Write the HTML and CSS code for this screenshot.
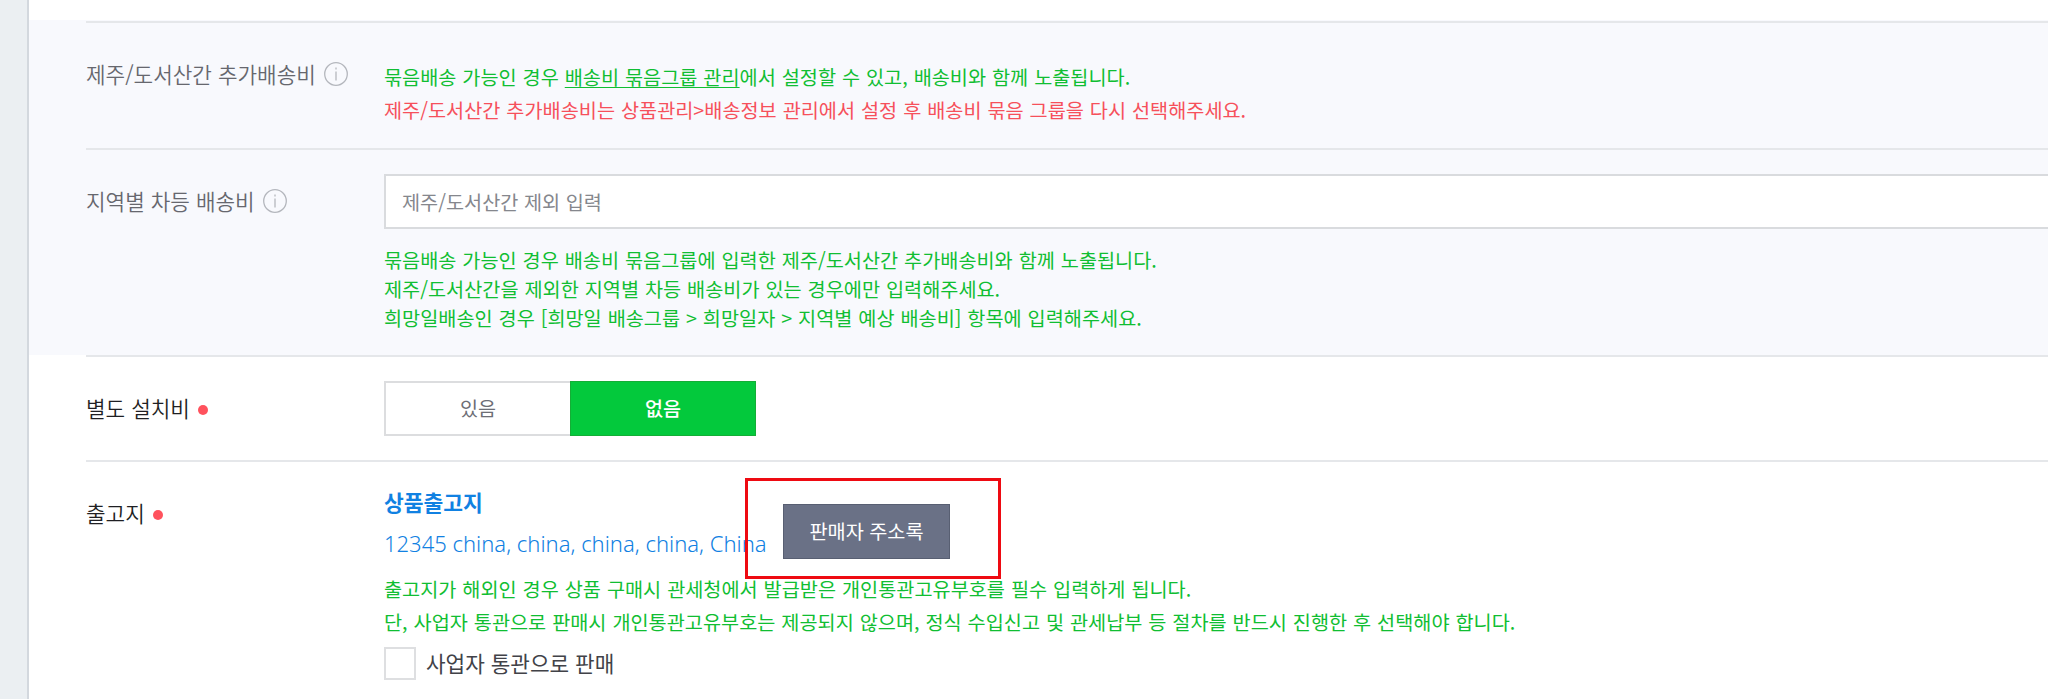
FILE: index.html
```
<!DOCTYPE html>
<html lang="ko">
<head>
    <meta charset="UTF-8">
    <meta name="viewport" content="width=device-width, initial-scale=1.0">
    <title>배송 정보</title>
    <link rel="stylesheet" href="styles.css">
</head>
<body>
    <div class="sidebar"></div>
    <main class="content">
        <div class="section section-sub">
            <div class="row row-extra">
                <div class="label">
                    <span>제주/도서산간 추가배송비</span>
                    <svg class="info" viewBox="0 0 24 24"><circle cx="12" cy="12" r="11.3"/><path d="M12 9.5v9M12 5.5v2"/></svg>
                </div>
                <div class="value">
                    <p class="help">묶음배송 가능인 경우 <a href="#">배송비 묶음그룹 관리</a>에서 설정할 수 있고, 배송비와 함께 노출됩니다.</p>
                    <p class="help warn">제주/도서산간 추가배송비는 상품관리&gt;배송정보 관리에서 설정 후 배송비 묶음 그룹을 다시 선택해주세요.</p>
                </div>
            </div>
            <div class="row row-region">
                <div class="label">
                    <span>지역별 차등 배송비</span>
                    <svg class="info" viewBox="0 0 24 24"><circle cx="12" cy="12" r="11.3"/><path d="M12 9.5v9M12 5.5v2"/></svg>
                </div>
                <div class="value">
                    <input class="input" type="text" placeholder="제주/도서산간 제외 입력">
                    <div class="help-tight">
                        <p class="help">묶음배송 가능인 경우 배송비 묶음그룹에 입력한 제주/도서산간 추가배송비와 함께 노출됩니다.</p>
                        <p class="help">제주/도서산간을 제외한 지역별 차등 배송비가 있는 경우에만 입력해주세요.</p>
                        <p class="help">희망일배송인 경우 [희망일 배송그룹 &gt; 희망일자 &gt; 지역별 예상 배송비] 항목에 입력해주세요.</p>
                    </div>
                </div>
            </div>
        </div>
        <div class="section">
            <div class="row row-install">
                <div class="label dark"><span>별도 설치비</span><i class="dot"></i></div>
                <div class="value toggle">
                    <button class="toggle-btn">있음</button>
                    <button class="toggle-btn active">없음</button>
                </div>
            </div>
            <div class="row row-origin">
                <div class="label dark"><span>출고지</span><i class="dot"></i></div>
                <div class="value">
                    <div class="address">
                        <div>
                            <strong class="address-name">상품출고지</strong>
                            <p class="address-text">12345 china, china, china, china, China</p>
                        </div>
                        <div class="book">
                            <button class="book-btn">판매자 주소록</button>
                            <div class="highlight"></div>
                        </div>
                    </div>
                    <p class="help">출고지가 해외인 경우 상품 구매시 관세청에서 발급받은 개인통관고유부호를 필수 입력하게 됩니다.</p>
                    <p class="help">단, 사업자 통관으로 판매시 개인통관고유부호는 제공되지 않으며, 정식 수입신고 및 관세납부 등 절차를 반드시 진행한 후 선택해야 합니다.</p>
                    <label class="check"><span class="box"></span><span>사업자 통관으로 판매</span></label>
                </div>
            </div>
        </div>
    </main>
</body>
</html>
```
FILE: styles.css
```
* {
    box-sizing: border-box;
}

body {
    margin: 0;
    height: 699px;
    display: flex;
    overflow: hidden;
    background: #fff;
    font-family: "Noto Sans CJK KR", sans-serif;
    color: #303038;
}

p {
    margin: 0;
}

button, input {
    font: inherit;
    border-radius: 0;
}

.sidebar {
    width: 29px;
    flex: none;
    background: #ebeff2;
    border-right: 2px solid #d3d8de;
}

.content {
    flex: 1;
    min-width: 0;
    padding-top: 20px;
}

.section {
    padding-left: 57px;
}

.section-sub {
    background: #f8f9fd;
    padding-top: 1px;
}

.row {
    display: flex;
    border-top: 2px solid #e5e7ea;
}

.row-extra {
    height: 127px;
    padding-top: 38px;
}

.row-region {
    height: 207px;
    padding-top: 24px;
}

.row-install {
    height: 105px;
    padding-top: 24px;
}

.row-origin {
    padding-top: 21px;
}

.label {
    width: 298px;
    flex: none;
    display: flex;
    align-items: center;
    height: 28px;
    font-size: 21.3px;
    font-weight: 350;
    line-height: 28px;
    color: #66676e;
    white-space: nowrap;
}

.row-extra .label {
    margin-top: -1px;
}

.row-region .label,
.row-install .label {
    margin-top: 13px;
}

.row-origin .label {
    margin-top: 16px;
}

.label.dark {
    color: #1f1f23;
}

.value {
    flex: 1;
    min-width: 0;
}

.info {
    width: 24px;
    height: 24px;
    margin-left: 8px;
    fill: none;
    stroke: #b4b7bd;
    stroke-width: 1.3;
}

.dot {
    width: 10px;
    height: 10px;
    margin: 3px 0 0 8px;
    border-radius: 50%;
    background: #ff525d;
}

.help {
    font-size: 19.7px;
    line-height: 32.5px;
    word-spacing: 0.4px;
    color: #10be32;
    white-space: nowrap;
}

.help a {
    color: inherit;
    text-underline-offset: 2px;
}

.help.warn {
    color: #f6505b;
}

.input {
    display: block;
    width: 1700px;
    height: 55px;
    padding: 0 16px;
    border: 2px solid #d9dbde;
    background: #fff;
    font-size: 19.7px;
}

.input::placeholder {
    color: #85878d;
}

.help-tight {
    padding-top: 16px;
}

.help-tight .help {
    line-height: 29px;
}

.toggle {
    display: flex;
}

.toggle-btn {
    width: 186px;
    height: 55px;
    padding-bottom: 3px;
    border: 2px solid #dcdddf;
    border-right: 0;
    background: #fff;
    font-size: 19.6px;
    color: #6d6e75;
}

.toggle-btn.active {
    border: 1px solid #14ae36;
    background: #03c93c;
    font-weight: 500;
    color: #fff;
}

.address {
    display: flex;
    height: 90px;
    color: #1181e2;
}

.address-name {
    display: block;
    font-size: 21.5px;
    line-height: 38px;
}

.address-text {
    width: 399px;
    padding-top: 1px;
    font-family: "Noto Sans", sans-serif;
    font-size: 22px;
    font-weight: 350;
    line-height: 42px;
    white-space: nowrap;
}

.book {
    position: relative;
    height: 55px;
    margin-top: 21px;
}

.book-btn {
    display: block;
    width: 167px;
    height: 55px;
    padding-bottom: 3px;
    border: 1px solid #585f72;
    background: #6a7186;
    font-size: 19.7px;
    color: #fff;
}

/* red frame around the address book button */
.highlight {
    position: absolute;
    left: -38px;
    top: -26px;
    width: 256px;
    height: 101px;
    border: 3px solid #ee0a12;
}

.check {
    display: flex;
    align-items: center;
    gap: 10px;
    margin-top: 9px;
    font-size: 21.3px;
    line-height: 31px;
    color: #414248;
}

.check span:last-child {
    padding-bottom: 2px;
}

.box {
    width: 32px;
    height: 33px;
    border: 2px solid #dedfe1;
    background: #fff;
}
```
